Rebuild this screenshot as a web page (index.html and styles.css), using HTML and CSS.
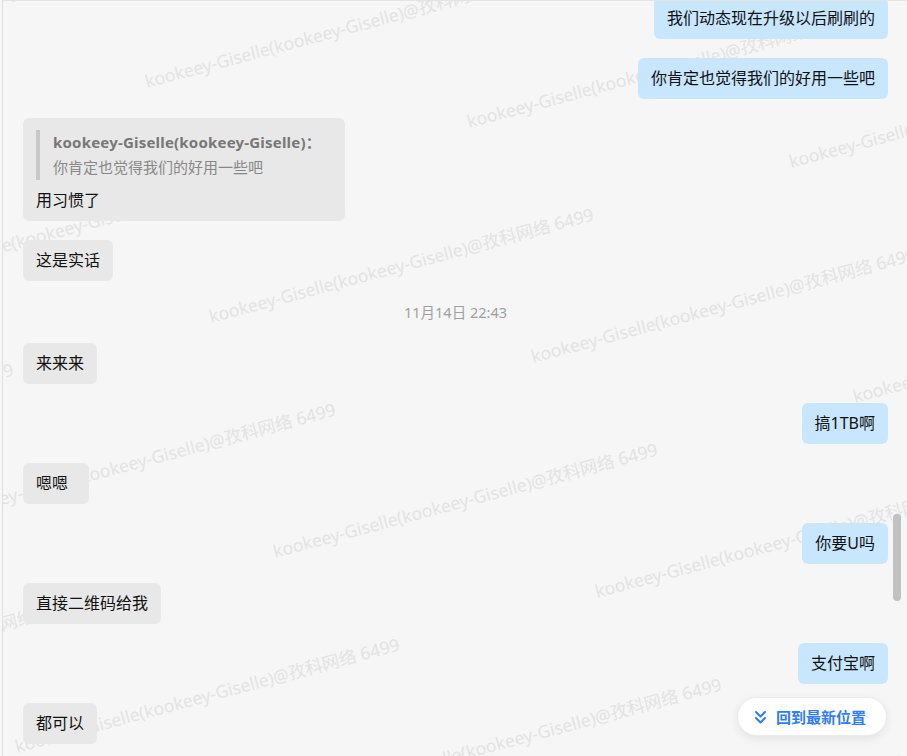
FILE: index.html
```html
<!DOCTYPE html>
<html lang="zh-CN">
<head>
    <meta charset="UTF-8">
    <meta name="viewport" content="width=device-width, initial-scale=1.0">
    <title>会话</title>
    <link rel="stylesheet" href="styles.css">
</head>
<body>

<div class="chat">
    <!-- Watermark layer, filled by the script below -->
    <div class="watermark" id="watermark"></div>

    <div class="messages">
        <div class="bubble self">我们动态现在升级以后刷刷的</div>
        <div class="bubble self">你肯定也觉得我们的好用一些吧</div>

        <div class="bubble other reply">
            <div class="quote">
                <div class="quote-name">kookeey-Giselle(kookeey-Giselle)：</div>
                <div class="quote-text">你肯定也觉得我们的好用一些吧</div>
            </div>
            <div class="reply-text">用习惯了</div>
        </div>

        <div class="bubble other">这是实话</div>

        <div class="time">11月14日 22:43</div>

        <div class="bubble other">来来来</div>
        <div class="bubble self">搞1TB啊</div>
        <div class="bubble other">嗯嗯&nbsp;&nbsp;</div>
        <div class="bubble self">你要U吗</div>
        <div class="bubble other">直接二维码给我</div>
        <div class="bubble self">支付宝啊</div>
        <div class="bubble other">都可以</div>
    </div>

    <div class="scroll-thumb"></div>

    <button class="back-latest">
        <svg width="13" height="15" viewBox="0 0 13 15" fill="none" stroke="#2f7cf6" stroke-width="2" stroke-linecap="round" stroke-linejoin="round">
            <path d="M2 2l4.5 4.5L11 2"/>
            <path d="M2 8l4.5 4.5L11 8"/>
        </svg>
        回到最新位置
    </button>
</div>

<script>
    // Repeat the watermark text across the chat area
    const watermark = document.getElementById('watermark');
    const label = 'kookeey-Giselle(kookeey-Giselle)@孜科网络 6499';
    for (let j = -1; j <= 4; j++) {
        for (let i = -3; i <= 3; i++) {
            const x = 147 + 322 * i + 64 * j;
            const y = 88 + 40 * i + 235 * j;
            if (x > 910 || x < -440 || y < -20 || y > 880) continue;
            const span = document.createElement('span');
            span.textContent = label;
            span.style.left = x + 'px';
            span.style.top = (y - 15) + 'px';
            watermark.appendChild(span);
        }
    }
</script>

</body>
</html>
```

FILE: styles.css
```css
/* General styling */
body {
    margin: 0;
    padding: 0;
    background: #f6f6f6;
    font-family: "Noto Sans", "Noto Sans CJK SC", sans-serif;
    color: #111;
}
.chat {
    position: relative;
    height: 755px;
    margin-left: 2px;
    border-left: 1px solid #e1e1e1;
    border-top: 1px solid #e4e4e4;
    background: #f6f6f6;
    overflow: hidden;
}

/* Watermark */
.watermark {
    position: absolute;
    top: -1px;
    left: -3px;
    right: 0;
    bottom: 0;
    pointer-events: none;
}
.watermark span {
    position: absolute;
    white-space: nowrap;
    font-size: 17.5px;
    line-height: 17px;
    color: #e3e3e3;
    transform-origin: 0 15px;
    transform: rotate(-15deg);
}

/* Message list */
.messages {
    position: relative;
    display: flex;
    flex-direction: column;
    gap: 19px;
    margin-top: -3px;
    padding: 0 19px 0 20px;
}
.bubble {
    padding: 10px 13px;
    font-size: 16px;
    line-height: 21px;
    border-radius: 6px;
    max-width: 60%;
    white-space: pre;
}
.bubble.other {
    align-self: flex-start;
    background: #e8e8e8;
}
.bubble.self {
    align-self: flex-end;
    background: #c9e6ff;
}
.bubble.reply {
    width: 296px;
    padding: 12px 13px 10px;
    white-space: normal;
}
.quote {
    border-left: 4px solid #c8c8c8;
    padding-left: 13px;
    font-size: 15px;
    line-height: 25px;
    margin-bottom: 10px;
}
.quote-name {
    font-weight: bold;
    color: #777;
    letter-spacing: 0.2px;
}
.quote-text {
    color: #888;
}
.time {
    text-align: center;
    font-size: 14.5px;
    line-height: 23px;
    color: #a0a0a0;
    margin-top: 1px;
}

/* Scrollbar thumb */
.scroll-thumb {
    position: absolute;
    top: 513px;
    right: 6px;
    width: 8px;
    height: 87px;
    border-radius: 4px;
    background: #c1c1c3;
}

/* Back to latest button */
.back-latest {
    position: absolute;
    right: 20px;
    bottom: 20px;
    display: flex;
    align-items: center;
    gap: 9px;
    height: 39px;
    padding: 0 20px 0 16px;
    border: 1px solid #ebebeb;
    border-radius: 20px;
    background: #fff;
    box-shadow: 0 3px 10px rgba(0, 0, 0, 0.08);
    font-family: "Noto Sans", "Noto Sans CJK SC", sans-serif;
    font-size: 15px;
    font-weight: bold;
    color: #2f7cf6;
    cursor: pointer;
}
.back-latest svg {
    margin-top: 1px;
}
```
